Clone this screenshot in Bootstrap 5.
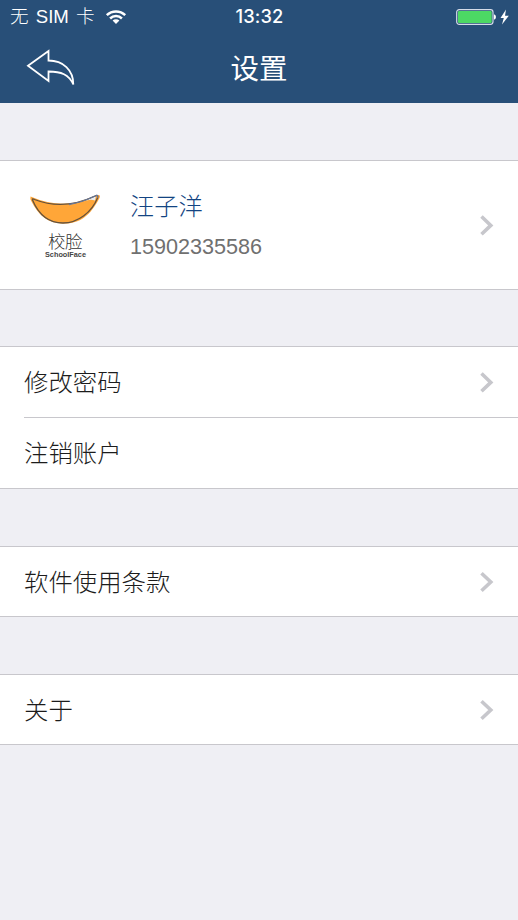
<!DOCTYPE html>
<html lang="zh-CN">
<head>
<meta charset="utf-8">
<meta name="viewport" content="width=device-width, initial-scale=1">
<title>设置</title>
<link href="https://cdn.jsdelivr.net/npm/bootstrap@5.3.0/dist/css/bootstrap.min.css" rel="stylesheet">
<style>
body{background:#efeff4;color:#333;font-family:"Liberation Sans","Noto Sans CJK SC",sans-serif;font-weight:300;min-height:920px;overflow:hidden}
svg{display:block;flex:none}
.top-area{background:#284f78;color:#fff;height:103px;margin-bottom:57px}
.status-row{display:grid;grid-template-columns:1fr auto 1fr;height:33px;padding:0 9px 0 10px;font-size:18.6px;line-height:33px}
.carrier{word-spacing:2px;padding-top:1px;line-height:32px}
.wifi{margin-left:10px}
.clock{font-family:Inter,sans-serif;font-weight:500;font-size:18.3px;letter-spacing:.1px}
.title-row{display:grid;grid-template-columns:1fr auto 1fr;height:70px;padding:0 26px}
.page-title{font-size:28.5px;font-weight:400;line-height:73px}
.back-btn{margin-top:16px;color:#fff;justify-self:start}
.set-group{margin-bottom:57px;border-top:1px solid #c8c7cc;border-bottom:1px solid #c8c7cc;background:#fff}
.set-group.lead-group{margin-bottom:56px}
.set-item{height:69px;padding:0 24px;border:0;background:#fff;color:#1c1c1c;font-size:24.4px;line-height:1}
.set-item>span{padding-top:3px}
.set-group.pair .set-item{height:70px}
.divide{height:1px;margin-left:24px;background:#c8c7cc}
.profile{height:128px}
.user-name{color:#134482;font-size:24.2px;line-height:36px}
.user-phone{color:#707070;font-size:21.6px;line-height:30px;margin-top:7px}
.brand{width:82px;margin-right:24px}
.chev{margin-right:-1px}
</style>
</head>
<body>
<header class="top-area">
  <div class="status-row">
    <div class="d-flex align-items-center"><span class="carrier">无 SIM 卡</span>
      <svg class="wifi" width="22" height="16" viewBox="0 0 22 16" fill="none" stroke="#fff" stroke-width="2.5"><path d="M1.8 6.100A13.300 13.300 0 0 1 20.200 6.100M5.100 9.500A8.400 8.400 0 0 1 16.900 9.500"/><path d="M7.600 11.600A4.800 4.800 0 0 1 14.400 11.600L11 15Z" fill="#fff" stroke="none"/></svg>
    </div>
    <div class="clock">13:32</div>
    <div class="d-flex align-items-center justify-content-end">
      <svg width="54" height="18" viewBox="0 0 54 18"><rect x="1.700" y="1.700" width="36.300" height="14.600" rx="2.500" fill="none" stroke="#d5dce8" stroke-width="1.200"/><rect x="3" y="3" width="33.700" height="12" rx="1" fill="#4cd964"/><path d="M39 6.200Q41 7 41 9T39 11.800Z" fill="#fff"/><path d="M51 1.500L45.500 10H48.800L47 16.500L53.800 7.800H50Z" fill="#fff"/></svg>
    </div>
  </div>
  <div class="title-row">
    <a class="back-btn" href="#" aria-label="返回"><svg width="50" height="38" viewBox="0 0 50 38" fill="none" stroke="#fff" stroke-width="1.800"><path d="M2 16.800L22.500 2V11.500C37 11.500 47.500 21 47.300 35.500C43 25.500 35 22.500 22.500 22.500V32Z"/></svg></a>
    <h1 class="page-title m-0">设置</h1>
  </div>
</header>
<main>
  <section class="list-group list-group-flush rounded-0 set-group lead-group">
    <a href="#" class="list-group-item set-item profile d-flex align-items-center">
      <svg class="brand" width="82" height="90" viewBox="0 0 82 90"><path d="M6.500 16.500Q41 31.500 72.500 15.500Q77 14 75.500 18C66 36 56 43.500 40 43.500C23 43.500 14 34.500 7 20.500Q6 18.500 6.500 16.500Z" fill="#ffa638"/><path d="M64 19.500L72 16L71 20.500Q66 18.500 60 21.500Z" fill="#e9eef2"/><path d="M8.500 20Q8 18 10.500 19.500C31 27.500 51 25.500 71 16Q74.500 14 73.500 18C68 32 54 43 39 43C24 43 14 33 8.500 20Z" fill="none" stroke="#64513c" stroke-width="1.300"/><path d="M45 24.500Q59 22 71 16Q74.500 14 73.500 18" fill="none" stroke="#66779a" stroke-width="1.300"/><text x="24" y="67.500" font-size="17.500" textLength="34.500" fill="#333">校脸</text><text x="21" y="77" font-size="7" font-weight="700" textLength="41" lengthAdjust="spacingAndGlyphs" fill="#444">SchoolFace</text></svg>
      <div class="flex-grow-1"><div class="user-name">汪子洋</div><div class="user-phone">15902335586</div></div>
      <svg class="chev" width="16" height="22" viewBox="0 0 16 22" fill="none" stroke="#c7c7cc" stroke-width="3.600"><path d="M2.500 2.500L11.800 11.400L2.500 20.300"/></svg>
    </a>
  </section>
  <section class="list-group list-group-flush rounded-0 set-group pair">
    <a href="#" class="list-group-item set-item d-flex align-items-center justify-content-between"><span>修改密码</span><svg class="chev" width="16" height="22" viewBox="0 0 16 22" fill="none" stroke="#c7c7cc" stroke-width="3.600"><path d="M2.500 2.500L11.800 11.400L2.500 20.300"/></svg></a>
    <div class="divide"></div>
    <a href="#" class="list-group-item set-item d-flex align-items-center"><span>注销账户</span></a>
  </section>
  <section class="list-group list-group-flush rounded-0 set-group">
    <a href="#" class="list-group-item set-item d-flex align-items-center justify-content-between"><span>软件使用条款</span><svg class="chev" width="16" height="22" viewBox="0 0 16 22" fill="none" stroke="#c7c7cc" stroke-width="3.600"><path d="M2.500 2.200L11.800 11L2.500 19.800"/></svg></a>
  </section>
  <section class="list-group list-group-flush rounded-0 set-group">
    <a href="#" class="list-group-item set-item d-flex align-items-center justify-content-between"><span>关于</span><svg class="chev" width="16" height="22" viewBox="0 0 16 22" fill="none" stroke="#c7c7cc" stroke-width="3.600"><path d="M2.500 2.200L11.800 11L2.500 19.800"/></svg></a>
  </section>
</main>
<script src="https://cdn.jsdelivr.net/npm/bootstrap@5.3.0/dist/js/bootstrap.bundle.min.js"></script>
</body>
</html>
